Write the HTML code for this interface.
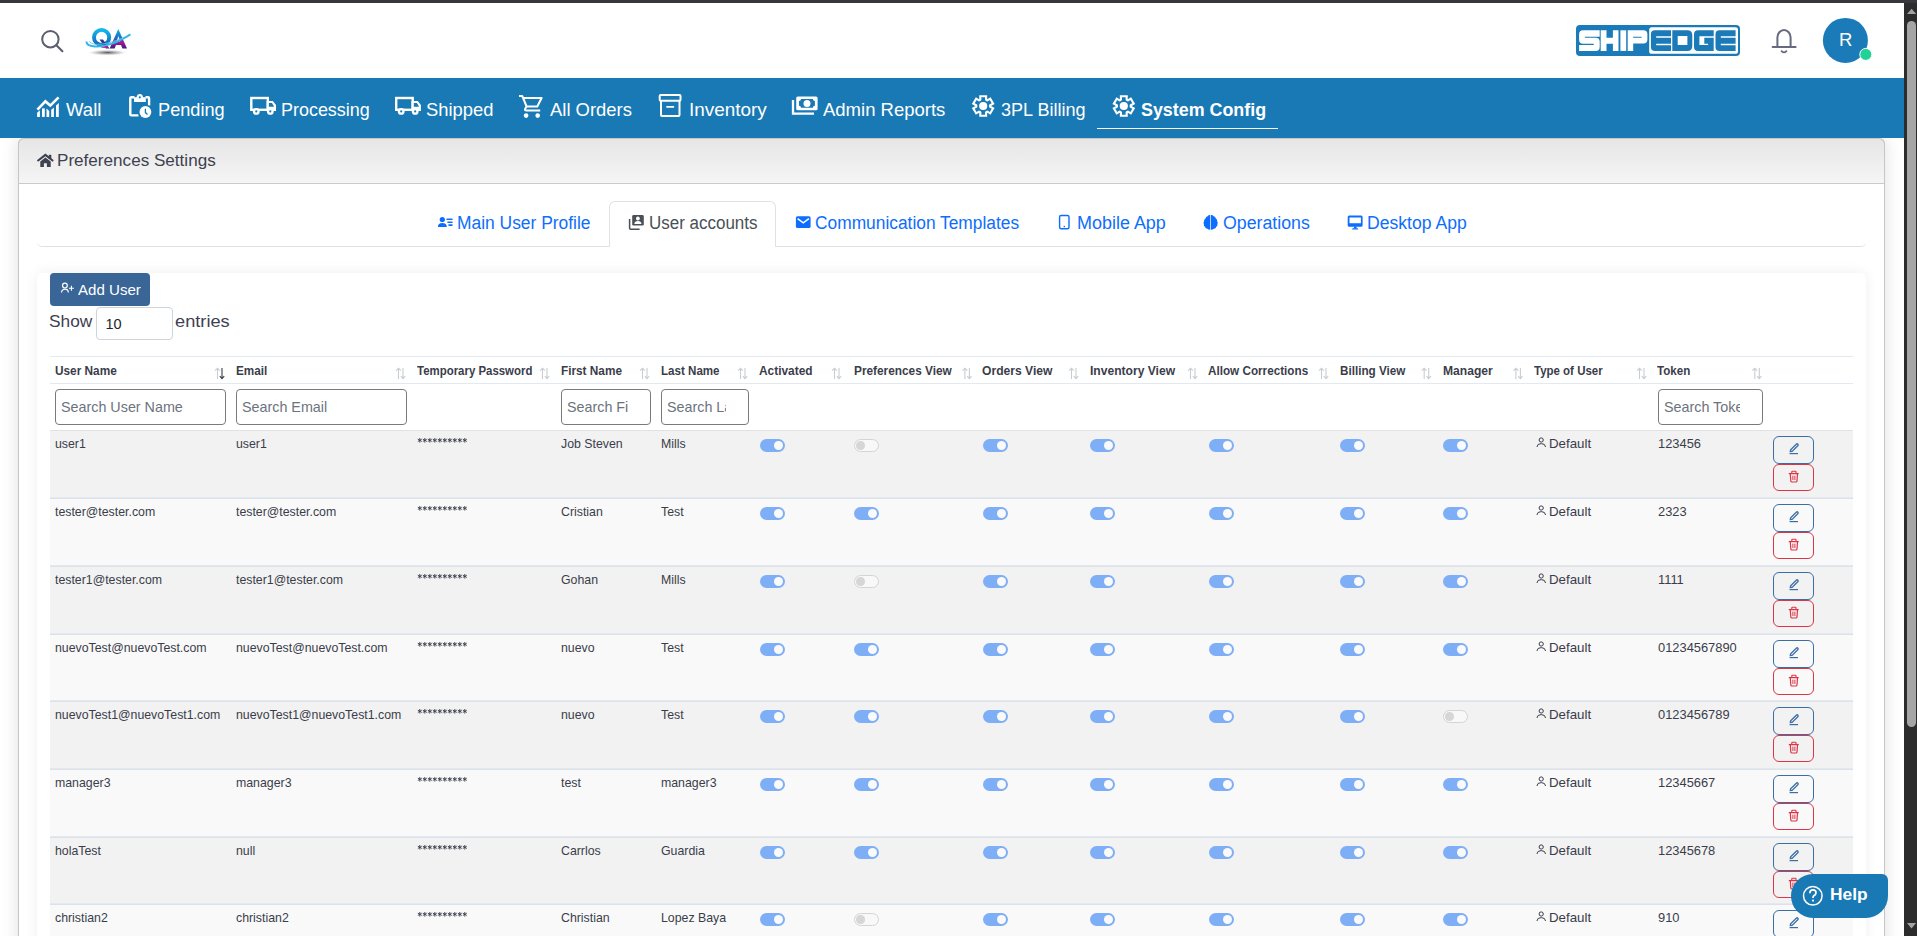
<!DOCTYPE html>
<html><head><meta charset="utf-8">
<style>
html,body{margin:0;padding:0}
body{width:1917px;height:936px;overflow:hidden;position:relative;background:#fff;font-family:"Liberation Sans", sans-serif}
.a{position:absolute;box-sizing:border-box}
.t{position:absolute;white-space:pre;transform-origin:0 0;font-family:"Liberation Sans", sans-serif}
</style></head><body>
<div class="a" style="left:18px;top:138px;width:1867px;height:830px;background:#fff;border:1px solid #c6c6c6;border-radius:6px;box-shadow:0 0 16px 2px rgba(0,0,0,0.10)"></div>
<div class="a" style="left:18px;top:138px;width:1867px;height:46px;background:linear-gradient(#e6e6e6,#f5f5f5);border:1px solid #c6c6c6;border-bottom-color:#cacaca;border-radius:6px 6px 0 0"></div>
<div class="a" style="left:0;top:0;width:1917px;height:78px;background:#fff"></div>
<div class="a" style="left:0;top:0;width:1917px;height:3px;background:#38373c"></div>
<div class="a" style="left:0;top:78px;width:1904px;height:60px;background:#1979b5"></div>
<div class="a" style="left:1097px;top:127.5px;width:181px;height:1.5px;background:#fff"></div>
<div class="a" style="left:37px;top:240px;width:1829px;height:7px;border-bottom:1px solid #dee2e6;border-radius:0 0 5px 5px"></div>
<div class="a" style="left:609px;top:201px;width:167px;height:46px;background:#fff;border:1px solid #dee2e6;border-bottom:none;border-radius:6px 6px 0 0"></div>
<div class="a" style="left:37px;top:273px;width:1829px;height:700px;background:#fff;border-radius:6px;box-shadow:0 0 14px rgba(0,0,0,0.07)"></div>
<div class="a" style="left:50px;top:273px;width:100px;height:33px;background:#396597;border-radius:4px"></div>
<div class="a" style="left:96.4px;top:306.5px;width:76.3px;height:33px;background:#fff;border:1px solid #ced4da;border-radius:4px"></div>
<div class="a" style="left:50px;top:356px;width:1803px;height:1px;background:#e3e9f1"></div>
<div class="a" style="left:50px;top:383px;width:1803px;height:1px;background:#e3e9f1"></div>
<div class="a" style="left:50px;top:430px;width:1803px;height:67px;background:#f2f2f2"></div>
<div class="a" style="left:50px;top:430px;width:1803px;height:1px;background:#dee2e5"></div>
<div class="a" style="left:50px;top:498px;width:1803px;height:67px;background:#f9f9f9"></div>
<div class="a" style="left:50px;top:498px;width:1803px;height:1px;background:#dee2e5"></div>
<div class="a" style="left:50px;top:497px;width:1803px;height:1px;background:#e3e9f2"></div>
<div class="a" style="left:50px;top:566px;width:1803px;height:67px;background:#f2f2f2"></div>
<div class="a" style="left:50px;top:566px;width:1803px;height:1px;background:#dee2e5"></div>
<div class="a" style="left:50px;top:565px;width:1803px;height:1px;background:#e3e9f2"></div>
<div class="a" style="left:50px;top:634px;width:1803px;height:66px;background:#f9f9f9"></div>
<div class="a" style="left:50px;top:634px;width:1803px;height:1px;background:#dee2e5"></div>
<div class="a" style="left:50px;top:633px;width:1803px;height:1px;background:#e3e9f2"></div>
<div class="a" style="left:50px;top:701px;width:1803px;height:67px;background:#f2f2f2"></div>
<div class="a" style="left:50px;top:701px;width:1803px;height:1px;background:#dee2e5"></div>
<div class="a" style="left:50px;top:700px;width:1803px;height:1px;background:#e3e9f2"></div>
<div class="a" style="left:50px;top:769px;width:1803px;height:67px;background:#f9f9f9"></div>
<div class="a" style="left:50px;top:769px;width:1803px;height:1px;background:#dee2e5"></div>
<div class="a" style="left:50px;top:768px;width:1803px;height:1px;background:#e3e9f2"></div>
<div class="a" style="left:50px;top:837px;width:1803px;height:66px;background:#f2f2f2"></div>
<div class="a" style="left:50px;top:837px;width:1803px;height:1px;background:#dee2e5"></div>
<div class="a" style="left:50px;top:836px;width:1803px;height:1px;background:#e3e9f2"></div>
<div class="a" style="left:50px;top:904px;width:1803px;height:67px;background:#f9f9f9"></div>
<div class="a" style="left:50px;top:904px;width:1803px;height:1px;background:#dee2e5"></div>
<div class="a" style="left:50px;top:903px;width:1803px;height:1px;background:#e3e9f2"></div>
<div class="a" style="left:55.3px;top:389.2px;width:170.5px;height:35.8px;border:1px solid #7a7a7a;border-radius:4px;background:#fff"></div>
<div class="a" style="left:60.9px;top:396.1px;width:142.0px;height:21px;overflow:hidden"><div class="t" style="position:static;font-size:15px;line-height:21px;color:#6c737d;transform:scaleX(0.955)">Search User Name</div></div>
<div class="a" style="left:236.3px;top:389.2px;width:170.3px;height:35.8px;border:1px solid #7a7a7a;border-radius:4px;background:#fff"></div>
<div class="a" style="left:241.9px;top:396.1px;width:141.8px;height:21px;overflow:hidden"><div class="t" style="position:static;font-size:15px;line-height:21px;color:#6c737d;transform:scaleX(0.955)">Search Email</div></div>
<div class="a" style="left:561.1px;top:389.2px;width:89.6px;height:35.8px;border:1px solid #7a7a7a;border-radius:4px;background:#fff"></div>
<div class="a" style="left:566.7px;top:396.1px;width:61.1px;height:21px;overflow:hidden"><div class="t" style="position:static;font-size:15px;line-height:21px;color:#6c737d;transform:scaleX(0.955)">Search First Name</div></div>
<div class="a" style="left:661px;top:389.2px;width:87.7px;height:35.8px;border:1px solid #7a7a7a;border-radius:4px;background:#fff"></div>
<div class="a" style="left:666.6px;top:396.1px;width:59.2px;height:21px;overflow:hidden"><div class="t" style="position:static;font-size:15px;line-height:21px;color:#6c737d;transform:scaleX(0.955)">Search Last Name</div></div>
<div class="a" style="left:1658.3px;top:389.2px;width:104.3px;height:35.8px;border:1px solid #7a7a7a;border-radius:4px;background:#fff"></div>
<div class="a" style="left:1663.9px;top:396.1px;width:75.8px;height:21px;overflow:hidden"><div class="t" style="position:static;font-size:15px;line-height:21px;color:#6c737d;transform:scaleX(0.955)">Search Token</div></div>
<div class="a" style="left:760px;top:439px;width:25px;height:13px;border-radius:7px;background:#7eaef6"></div>
<div class="a" style="left:774px;top:441px;width:9px;height:9px;border-radius:50%;background:#fafafa"></div>
<div class="a" style="left:854px;top:439px;width:25px;height:13px;border-radius:7px;background:#f8f8f8;border:1px solid #d4d4d4"></div>
<div class="a" style="left:856.3px;top:441.2px;width:8.5px;height:8.5px;border-radius:50%;background:#d6d6d6"></div>
<div class="a" style="left:983px;top:439px;width:25px;height:13px;border-radius:7px;background:#7eaef6"></div>
<div class="a" style="left:997px;top:441px;width:9px;height:9px;border-radius:50%;background:#fafafa"></div>
<div class="a" style="left:1090px;top:439px;width:25px;height:13px;border-radius:7px;background:#7eaef6"></div>
<div class="a" style="left:1104px;top:441px;width:9px;height:9px;border-radius:50%;background:#fafafa"></div>
<div class="a" style="left:1209px;top:439px;width:25px;height:13px;border-radius:7px;background:#7eaef6"></div>
<div class="a" style="left:1223px;top:441px;width:9px;height:9px;border-radius:50%;background:#fafafa"></div>
<div class="a" style="left:1340px;top:439px;width:25px;height:13px;border-radius:7px;background:#7eaef6"></div>
<div class="a" style="left:1354px;top:441px;width:9px;height:9px;border-radius:50%;background:#fafafa"></div>
<div class="a" style="left:1443px;top:439px;width:25px;height:13px;border-radius:7px;background:#7eaef6"></div>
<div class="a" style="left:1457px;top:441px;width:9px;height:9px;border-radius:50%;background:#fafafa"></div>
<div class="a" style="left:1773px;top:436px;width:41px;height:28px;border:1px solid #3b6ea5;border-radius:6px"></div>
<div class="a" style="left:1773px;top:464px;width:41px;height:27px;border:1px solid #dc3545;border-radius:6px"></div>
<div class="a" style="left:760px;top:507px;width:25px;height:13px;border-radius:7px;background:#7eaef6"></div>
<div class="a" style="left:774px;top:509px;width:9px;height:9px;border-radius:50%;background:#fafafa"></div>
<div class="a" style="left:854px;top:507px;width:25px;height:13px;border-radius:7px;background:#7eaef6"></div>
<div class="a" style="left:868px;top:509px;width:9px;height:9px;border-radius:50%;background:#fafafa"></div>
<div class="a" style="left:983px;top:507px;width:25px;height:13px;border-radius:7px;background:#7eaef6"></div>
<div class="a" style="left:997px;top:509px;width:9px;height:9px;border-radius:50%;background:#fafafa"></div>
<div class="a" style="left:1090px;top:507px;width:25px;height:13px;border-radius:7px;background:#7eaef6"></div>
<div class="a" style="left:1104px;top:509px;width:9px;height:9px;border-radius:50%;background:#fafafa"></div>
<div class="a" style="left:1209px;top:507px;width:25px;height:13px;border-radius:7px;background:#7eaef6"></div>
<div class="a" style="left:1223px;top:509px;width:9px;height:9px;border-radius:50%;background:#fafafa"></div>
<div class="a" style="left:1340px;top:507px;width:25px;height:13px;border-radius:7px;background:#7eaef6"></div>
<div class="a" style="left:1354px;top:509px;width:9px;height:9px;border-radius:50%;background:#fafafa"></div>
<div class="a" style="left:1443px;top:507px;width:25px;height:13px;border-radius:7px;background:#7eaef6"></div>
<div class="a" style="left:1457px;top:509px;width:9px;height:9px;border-radius:50%;background:#fafafa"></div>
<div class="a" style="left:1773px;top:504px;width:41px;height:28px;border:1px solid #3b6ea5;border-radius:6px"></div>
<div class="a" style="left:1773px;top:532px;width:41px;height:27px;border:1px solid #dc3545;border-radius:6px"></div>
<div class="a" style="left:760px;top:575px;width:25px;height:13px;border-radius:7px;background:#7eaef6"></div>
<div class="a" style="left:774px;top:577px;width:9px;height:9px;border-radius:50%;background:#fafafa"></div>
<div class="a" style="left:854px;top:575px;width:25px;height:13px;border-radius:7px;background:#f8f8f8;border:1px solid #d4d4d4"></div>
<div class="a" style="left:856.3px;top:577.2px;width:8.5px;height:8.5px;border-radius:50%;background:#d6d6d6"></div>
<div class="a" style="left:983px;top:575px;width:25px;height:13px;border-radius:7px;background:#7eaef6"></div>
<div class="a" style="left:997px;top:577px;width:9px;height:9px;border-radius:50%;background:#fafafa"></div>
<div class="a" style="left:1090px;top:575px;width:25px;height:13px;border-radius:7px;background:#7eaef6"></div>
<div class="a" style="left:1104px;top:577px;width:9px;height:9px;border-radius:50%;background:#fafafa"></div>
<div class="a" style="left:1209px;top:575px;width:25px;height:13px;border-radius:7px;background:#7eaef6"></div>
<div class="a" style="left:1223px;top:577px;width:9px;height:9px;border-radius:50%;background:#fafafa"></div>
<div class="a" style="left:1340px;top:575px;width:25px;height:13px;border-radius:7px;background:#7eaef6"></div>
<div class="a" style="left:1354px;top:577px;width:9px;height:9px;border-radius:50%;background:#fafafa"></div>
<div class="a" style="left:1443px;top:575px;width:25px;height:13px;border-radius:7px;background:#7eaef6"></div>
<div class="a" style="left:1457px;top:577px;width:9px;height:9px;border-radius:50%;background:#fafafa"></div>
<div class="a" style="left:1773px;top:572px;width:41px;height:28px;border:1px solid #3b6ea5;border-radius:6px"></div>
<div class="a" style="left:1773px;top:600px;width:41px;height:27px;border:1px solid #dc3545;border-radius:6px"></div>
<div class="a" style="left:760px;top:643px;width:25px;height:13px;border-radius:7px;background:#7eaef6"></div>
<div class="a" style="left:774px;top:645px;width:9px;height:9px;border-radius:50%;background:#fafafa"></div>
<div class="a" style="left:854px;top:643px;width:25px;height:13px;border-radius:7px;background:#7eaef6"></div>
<div class="a" style="left:868px;top:645px;width:9px;height:9px;border-radius:50%;background:#fafafa"></div>
<div class="a" style="left:983px;top:643px;width:25px;height:13px;border-radius:7px;background:#7eaef6"></div>
<div class="a" style="left:997px;top:645px;width:9px;height:9px;border-radius:50%;background:#fafafa"></div>
<div class="a" style="left:1090px;top:643px;width:25px;height:13px;border-radius:7px;background:#7eaef6"></div>
<div class="a" style="left:1104px;top:645px;width:9px;height:9px;border-radius:50%;background:#fafafa"></div>
<div class="a" style="left:1209px;top:643px;width:25px;height:13px;border-radius:7px;background:#7eaef6"></div>
<div class="a" style="left:1223px;top:645px;width:9px;height:9px;border-radius:50%;background:#fafafa"></div>
<div class="a" style="left:1340px;top:643px;width:25px;height:13px;border-radius:7px;background:#7eaef6"></div>
<div class="a" style="left:1354px;top:645px;width:9px;height:9px;border-radius:50%;background:#fafafa"></div>
<div class="a" style="left:1443px;top:643px;width:25px;height:13px;border-radius:7px;background:#7eaef6"></div>
<div class="a" style="left:1457px;top:645px;width:9px;height:9px;border-radius:50%;background:#fafafa"></div>
<div class="a" style="left:1773px;top:640px;width:41px;height:28px;border:1px solid #3b6ea5;border-radius:6px"></div>
<div class="a" style="left:1773px;top:668px;width:41px;height:27px;border:1px solid #dc3545;border-radius:6px"></div>
<div class="a" style="left:760px;top:710px;width:25px;height:13px;border-radius:7px;background:#7eaef6"></div>
<div class="a" style="left:774px;top:712px;width:9px;height:9px;border-radius:50%;background:#fafafa"></div>
<div class="a" style="left:854px;top:710px;width:25px;height:13px;border-radius:7px;background:#7eaef6"></div>
<div class="a" style="left:868px;top:712px;width:9px;height:9px;border-radius:50%;background:#fafafa"></div>
<div class="a" style="left:983px;top:710px;width:25px;height:13px;border-radius:7px;background:#7eaef6"></div>
<div class="a" style="left:997px;top:712px;width:9px;height:9px;border-radius:50%;background:#fafafa"></div>
<div class="a" style="left:1090px;top:710px;width:25px;height:13px;border-radius:7px;background:#7eaef6"></div>
<div class="a" style="left:1104px;top:712px;width:9px;height:9px;border-radius:50%;background:#fafafa"></div>
<div class="a" style="left:1209px;top:710px;width:25px;height:13px;border-radius:7px;background:#7eaef6"></div>
<div class="a" style="left:1223px;top:712px;width:9px;height:9px;border-radius:50%;background:#fafafa"></div>
<div class="a" style="left:1340px;top:710px;width:25px;height:13px;border-radius:7px;background:#7eaef6"></div>
<div class="a" style="left:1354px;top:712px;width:9px;height:9px;border-radius:50%;background:#fafafa"></div>
<div class="a" style="left:1443px;top:710px;width:25px;height:13px;border-radius:7px;background:#f8f8f8;border:1px solid #d4d4d4"></div>
<div class="a" style="left:1445.3px;top:712.2px;width:8.5px;height:8.5px;border-radius:50%;background:#d6d6d6"></div>
<div class="a" style="left:1773px;top:707px;width:41px;height:28px;border:1px solid #3b6ea5;border-radius:6px"></div>
<div class="a" style="left:1773px;top:735px;width:41px;height:27px;border:1px solid #dc3545;border-radius:6px"></div>
<div class="a" style="left:760px;top:778px;width:25px;height:13px;border-radius:7px;background:#7eaef6"></div>
<div class="a" style="left:774px;top:780px;width:9px;height:9px;border-radius:50%;background:#fafafa"></div>
<div class="a" style="left:854px;top:778px;width:25px;height:13px;border-radius:7px;background:#7eaef6"></div>
<div class="a" style="left:868px;top:780px;width:9px;height:9px;border-radius:50%;background:#fafafa"></div>
<div class="a" style="left:983px;top:778px;width:25px;height:13px;border-radius:7px;background:#7eaef6"></div>
<div class="a" style="left:997px;top:780px;width:9px;height:9px;border-radius:50%;background:#fafafa"></div>
<div class="a" style="left:1090px;top:778px;width:25px;height:13px;border-radius:7px;background:#7eaef6"></div>
<div class="a" style="left:1104px;top:780px;width:9px;height:9px;border-radius:50%;background:#fafafa"></div>
<div class="a" style="left:1209px;top:778px;width:25px;height:13px;border-radius:7px;background:#7eaef6"></div>
<div class="a" style="left:1223px;top:780px;width:9px;height:9px;border-radius:50%;background:#fafafa"></div>
<div class="a" style="left:1340px;top:778px;width:25px;height:13px;border-radius:7px;background:#7eaef6"></div>
<div class="a" style="left:1354px;top:780px;width:9px;height:9px;border-radius:50%;background:#fafafa"></div>
<div class="a" style="left:1443px;top:778px;width:25px;height:13px;border-radius:7px;background:#7eaef6"></div>
<div class="a" style="left:1457px;top:780px;width:9px;height:9px;border-radius:50%;background:#fafafa"></div>
<div class="a" style="left:1773px;top:775px;width:41px;height:28px;border:1px solid #3b6ea5;border-radius:6px"></div>
<div class="a" style="left:1773px;top:803px;width:41px;height:27px;border:1px solid #dc3545;border-radius:6px"></div>
<div class="a" style="left:760px;top:846px;width:25px;height:13px;border-radius:7px;background:#7eaef6"></div>
<div class="a" style="left:774px;top:848px;width:9px;height:9px;border-radius:50%;background:#fafafa"></div>
<div class="a" style="left:854px;top:846px;width:25px;height:13px;border-radius:7px;background:#7eaef6"></div>
<div class="a" style="left:868px;top:848px;width:9px;height:9px;border-radius:50%;background:#fafafa"></div>
<div class="a" style="left:983px;top:846px;width:25px;height:13px;border-radius:7px;background:#7eaef6"></div>
<div class="a" style="left:997px;top:848px;width:9px;height:9px;border-radius:50%;background:#fafafa"></div>
<div class="a" style="left:1090px;top:846px;width:25px;height:13px;border-radius:7px;background:#7eaef6"></div>
<div class="a" style="left:1104px;top:848px;width:9px;height:9px;border-radius:50%;background:#fafafa"></div>
<div class="a" style="left:1209px;top:846px;width:25px;height:13px;border-radius:7px;background:#7eaef6"></div>
<div class="a" style="left:1223px;top:848px;width:9px;height:9px;border-radius:50%;background:#fafafa"></div>
<div class="a" style="left:1340px;top:846px;width:25px;height:13px;border-radius:7px;background:#7eaef6"></div>
<div class="a" style="left:1354px;top:848px;width:9px;height:9px;border-radius:50%;background:#fafafa"></div>
<div class="a" style="left:1443px;top:846px;width:25px;height:13px;border-radius:7px;background:#7eaef6"></div>
<div class="a" style="left:1457px;top:848px;width:9px;height:9px;border-radius:50%;background:#fafafa"></div>
<div class="a" style="left:1773px;top:843px;width:41px;height:28px;border:1px solid #3b6ea5;border-radius:6px"></div>
<div class="a" style="left:1773px;top:871px;width:41px;height:27px;border:1px solid #dc3545;border-radius:6px"></div>
<div class="a" style="left:760px;top:913px;width:25px;height:13px;border-radius:7px;background:#7eaef6"></div>
<div class="a" style="left:774px;top:915px;width:9px;height:9px;border-radius:50%;background:#fafafa"></div>
<div class="a" style="left:854px;top:913px;width:25px;height:13px;border-radius:7px;background:#f8f8f8;border:1px solid #d4d4d4"></div>
<div class="a" style="left:856.3px;top:915.2px;width:8.5px;height:8.5px;border-radius:50%;background:#d6d6d6"></div>
<div class="a" style="left:983px;top:913px;width:25px;height:13px;border-radius:7px;background:#7eaef6"></div>
<div class="a" style="left:997px;top:915px;width:9px;height:9px;border-radius:50%;background:#fafafa"></div>
<div class="a" style="left:1090px;top:913px;width:25px;height:13px;border-radius:7px;background:#7eaef6"></div>
<div class="a" style="left:1104px;top:915px;width:9px;height:9px;border-radius:50%;background:#fafafa"></div>
<div class="a" style="left:1209px;top:913px;width:25px;height:13px;border-radius:7px;background:#7eaef6"></div>
<div class="a" style="left:1223px;top:915px;width:9px;height:9px;border-radius:50%;background:#fafafa"></div>
<div class="a" style="left:1340px;top:913px;width:25px;height:13px;border-radius:7px;background:#7eaef6"></div>
<div class="a" style="left:1354px;top:915px;width:9px;height:9px;border-radius:50%;background:#fafafa"></div>
<div class="a" style="left:1443px;top:913px;width:25px;height:13px;border-radius:7px;background:#7eaef6"></div>
<div class="a" style="left:1457px;top:915px;width:9px;height:9px;border-radius:50%;background:#fafafa"></div>
<div class="a" style="left:1773px;top:910px;width:41px;height:28px;border:1px solid #3b6ea5;border-radius:6px"></div>
<div class="a" style="left:1773px;top:938px;width:41px;height:27px;border:1px solid #dc3545;border-radius:6px"></div>
<div class="a" style="left:1904px;top:0;width:13px;height:936px;background:#2c2c2c"></div>
<div class="a" style="left:1904px;top:0;width:13px;height:3px;background:#38373c"></div>
<div class="a" style="left:1907px;top:21px;width:9px;height:706px;border-radius:4.5px;background:#a5a5a5"></div>
<svg class="a" style="left:0;top:0" width="1917" height="936">
<circle cx="50.4" cy="39.2" r="8.2" fill="none" stroke="#5c5f6e" stroke-width="2"/>
<line x1="56.4" y1="45.2" x2="62.4" y2="51.2" stroke="#5c5f6e" stroke-width="2.1" stroke-linecap="round"/>
<defs>
<linearGradient id="gq" x1="0" y1="0" x2="0" y2="1"><stop offset="0" stop-color="#12b7ec"/><stop offset="1" stop-color="#1a62b8"/></linearGradient>
<linearGradient id="ga" x1="0" y1="0" x2="0" y2="1"><stop offset="0" stop-color="#12b4e8"/><stop offset="0.45" stop-color="#1b6fc2"/><stop offset="0.7" stop-color="#a8168c"/><stop offset="1" stop-color="#3a1f7c"/></linearGradient>
<radialGradient id="gsh" cx="0.5" cy="0.5" r="0.5"><stop offset="0" stop-color="#444" stop-opacity="0.9"/><stop offset="0.6" stop-color="#888" stop-opacity="0.35"/><stop offset="1" stop-color="#fff" stop-opacity="0"/></radialGradient>
</defs>
<ellipse cx="107.5" cy="52.6" rx="21" ry="3.2" fill="url(#gsh)"/>
<ellipse cx="101.6" cy="37.4" rx="7.6" ry="7.5" fill="none" stroke="url(#gq)" stroke-width="3.9"/>
<path d="M99.5,39.6 H103 L109.5,48.5 H105.8 Z" fill="#2a3f92"/>
<path fill-rule="evenodd" d="M118.3,29 L109.6,48.5 H114.6 L116,45 H121 L122.4,48.5 H127 Z M118.4,36 L116.6,41.6 H120.2 Z" fill="url(#ga)"/>
<path d="M101,46.6 C103,47.5 106,47.4 108,46.6" fill="none" stroke="#d81d8a" stroke-width="1.5"/><path d="M86.4,41.6 C86.5,47.8 100,47.8 112,43.6 C119,41.2 125,37.5 130.5,34.4" fill="none" stroke="#2fb6ea" stroke-width="2"/>
<path d="M89.5,41 C91,45.5 103,46.5 124,37.5" fill="none" stroke="#5cc8f0" stroke-width="0.9"/>
<rect x="1576" y="25" width="164" height="31" rx="4" fill="#1b7ab8"/>
<rect x="1649.2" y="27.2" width="88.8" height="26.6" rx="2.6" fill="#fff"/>
<path fill="#fff" d="M1579.1,34.3 Q1579.1,30.3 1583.1,30.3 H1599.7 V36.8 H1584.9 V37.8 H1595.7 Q1599.7,37.8 1599.7,41.8 V46.9 Q1599.7,50.9 1595.7,50.9 H1579.1 V44.9 H1593.7 V43.8 H1583.1 Q1579.1,43.8 1579.1,39.8 Z"/>
<path fill="#fff" d="M1600.7,30.3 H1606.5 V37.8 H1612.9 V30.3 H1618.5 V50.9 H1612.9 V43.8 H1606.5 V50.9 H1600.7 Z"/>
<rect x="1620.4" y="30.3" width="5.8" height="20.6" fill="#fff"/>
<path fill="#fff" fill-rule="evenodd" d="M1627.7,30.3 H1643.4 Q1647.4,30.3 1647.4,34.3 V39.6 Q1647.4,43.6 1643.4,43.6 H1633.2 V50.9 H1627.7 Z M1633.1,36.8 H1641.6 V37.8 H1633.1 Z"/>
<path fill="#1b7ab8" d="M1654.9,30.2 H1671.0 V36.3 H1656.2 V37.8 H1671.0 V43.7 H1656.2 V45.3 H1671.0 V50.9 H1654.9 Q1650.9,50.9 1650.9,46.9 V34.2 Q1650.9,30.2 1654.9,30.2 Z"/>
<path fill="#1b7ab8" d="M1719.5,30.2 H1735.6 V36.3 H1720.8 V37.8 H1735.6 V43.7 H1720.8 V45.3 H1735.6 V50.9 H1719.5 Q1715.5,50.9 1715.5,46.9 V34.2 Q1715.5,30.2 1719.5,30.2 Z"/>
<path fill="#1b7ab8" fill-rule="evenodd" d="M1672.3,30.2 H1687.3 Q1692.3,30.2 1692.3,35.2 V45.9 Q1692.3,50.9 1687.3,50.9 H1672.3 Z M1677.7,36 H1687.4 V45 H1677.7 Z"/>
<path fill="#1b7ab8" fill-rule="evenodd" d="M1698,30.2 H1713.7 V50.9 H1698 Q1694,50.9 1694,46.9 V34.2 Q1694,30.2 1698,30.2 Z M1699.4,36.3 H1713.7 V37.8 H1704.3 V43.7 H1708.1 V45 H1699.4 Z"/>
<path d="M1777.4,46.5 V37.6 A6.6,7.6 0 0 1 1790.6,37.6 V46.5" fill="none" stroke="#676a7d" stroke-width="2"/>
<path d="M1772.6,47 H1795.6" stroke="#676a7d" stroke-width="2" stroke-linecap="round"/>
<path d="M1781.6,51.2 Q1784,53.6 1786.4,51.2" fill="none" stroke="#676a7d" stroke-width="1.8" stroke-linecap="round"/>
<circle cx="1845.4" cy="40.4" r="22.5" fill="#1b7ab8"/>
<circle cx="1865.8" cy="54.4" r="6" fill="#21d296" stroke="#fff" stroke-width="1"/>
<g transform="translate(34,90)"><polyline points="3.4,19.6 11.4,11.4 16.3,15.6 24.6,7.3" fill="none" stroke="#ffffff" stroke-width="2.6"/><path d="M3.1,22.8 L5.9,20.2 V26.9 H3.1 Z" fill="#ffffff"/><rect x="8" y="18.4" width="2.8" height="8.5" fill="#ffffff"/><path d="M12.5,18.4 L15.2,21 V26.9 H12.5 Z" fill="#ffffff"/><path d="M17.2,19.8 L19.9,17.5 V26.9 H17.2 Z" fill="#ffffff"/><path d="M22,15.5 L24.8,13 V26.9 H22 Z" fill="#ffffff"/></g>
<g transform="translate(126,90)"><path d="M12.5,25.4 H5.4 Q4.3,25.4 4.3,24.3 V8.3 Q4.3,7.2 5.4,7.2 H8.5 M19.5,7.2 H22 Q23.1,7.2 23.1,8.3 V15.5" fill="none" stroke="#ffffff" stroke-width="2.4"/><path d="M8,11.9 V7.2 H10.6 Q11,4.1 13.8,4.1 Q16.6,4.1 17,7.2 H19.8 V11.9 Z" fill="#ffffff"/><circle cx="13.8" cy="7.3" r="1.1" fill="#1979b5"/><circle cx="19.4" cy="22" r="7.2" fill="#1979b5"/><circle cx="19.4" cy="22" r="5.9" fill="#ffffff"/><path d="M19.4,18.8 V22.6 L21.5,24.5" fill="none" stroke="#1979b5" stroke-width="1.3"/></g>
<g transform="translate(246,90)"><rect x="5.3" y="8" width="16.5" height="11.8" fill="none" stroke="#ffffff" stroke-width="2.4"/><path d="M20.6,11 H26.8 L30,15 V21 H20.6 Z" fill="#ffffff"/><path d="M22.9,13 H26 L28.2,16.8 H22.9 Z" fill="#1979b5"/><circle cx="10.3" cy="21.4" r="3.4" fill="#ffffff"/><circle cx="10.3" cy="21.4" r="1.1" fill="#1979b5"/><circle cx="24.3" cy="21.4" r="3.4" fill="#ffffff"/><circle cx="24.3" cy="21.4" r="1.1" fill="#1979b5"/></g>
<g transform="translate(390.9,90)"><rect x="5.3" y="8" width="16.5" height="11.8" fill="none" stroke="#ffffff" stroke-width="2.4"/><path d="M20.6,11 H26.8 L30,15 V21 H20.6 Z" fill="#ffffff"/><path d="M22.9,13 H26 L28.2,16.8 H22.9 Z" fill="#1979b5"/><circle cx="10.3" cy="21.4" r="3.4" fill="#ffffff"/><circle cx="10.3" cy="21.4" r="1.1" fill="#1979b5"/><circle cx="24.3" cy="21.4" r="3.4" fill="#ffffff"/><circle cx="24.3" cy="21.4" r="1.1" fill="#1979b5"/></g>
<g transform="translate(516,90)"><path d="M3,5.9 H6.2 L10.6,16.5 H21.3 L25.6,8 H7" fill="none" stroke="#ffffff" stroke-width="2" stroke-linejoin="round"/><path d="M10.6,16.5 L9.2,18.6 Q8.4,20.6 10.4,20.6 H24.2" fill="none" stroke="#ffffff" stroke-width="2"/><circle cx="10.1" cy="25.6" r="2.3" fill="#ffffff"/><circle cx="21.7" cy="25.6" r="2.3" fill="#ffffff"/></g>
<g transform="translate(655,90)"><rect x="4.7" y="5.1" width="20.8" height="5.6" rx="1" fill="none" stroke="#ffffff" stroke-width="2"/><path d="M6,10.7 V25 Q6,26 7,26 H23.5 Q24.5,26 24.5,25 V10.7" fill="none" stroke="#ffffff" stroke-width="2"/><line x1="12" y1="16.8" x2="18.4" y2="16.8" stroke="#ffffff" stroke-width="1.8" stroke-linecap="round"/></g>
<g transform="translate(788,90)"><rect x="8.2" y="6.5" width="21.4" height="13.8" rx="1.6" fill="#ffffff"/><path d="M13,9 H24.9 Q24.9,11 26.9,11 V15.8 Q24.9,15.8 24.9,17.8 H13 Q13,15.8 11,15.8 V11 Q13,11 13,9 Z" fill="#1979b5"/><circle cx="19" cy="13.4" r="3.5" fill="#ffffff"/><path d="M5,10 V23.7 H26" fill="none" stroke="#ffffff" stroke-width="2.3"/></g>
<g transform="translate(968,90)"><path d="M12.34,9.61 L12.28,6.23 L18.12,6.23 L18.06,9.61 L18.59,10.12 L19.31,10.33 L22.21,8.59 L25.12,13.64 L22.16,15.28 L21.99,16.00 L22.16,16.72 L25.12,18.36 L22.21,23.41 L19.31,21.67 L18.59,21.88 L18.06,22.39 L18.12,25.77 L12.28,25.77 L12.34,22.39 L11.80,21.88 L11.09,21.67 L8.19,23.41 L5.28,18.36 L8.24,16.72 L8.41,16.00 L8.24,15.28 L5.28,13.64 L8.19,8.59 L11.09,10.33 L11.81,10.12 Z" fill="none" stroke="#ffffff" stroke-width="2.1" stroke-linejoin="miter"/><circle cx="15.2" cy="16" r="4.1" fill="#ffffff"/></g>
<g transform="translate(1108.6,90)"><path d="M12.34,9.61 L12.28,6.23 L18.12,6.23 L18.06,9.61 L18.59,10.12 L19.31,10.33 L22.21,8.59 L25.12,13.64 L22.16,15.28 L21.99,16.00 L22.16,16.72 L25.12,18.36 L22.21,23.41 L19.31,21.67 L18.59,21.88 L18.06,22.39 L18.12,25.77 L12.28,25.77 L12.34,22.39 L11.80,21.88 L11.09,21.67 L8.19,23.41 L5.28,18.36 L8.24,16.72 L8.41,16.00 L8.24,15.28 L5.28,13.64 L8.19,8.59 L11.09,10.33 L11.81,10.12 Z" fill="none" stroke="#ffffff" stroke-width="2.1" stroke-linejoin="miter"/><circle cx="15.2" cy="16" r="4.1" fill="#ffffff"/></g>
<path d="M37.5,161 L45.4,154.9 L53.2,161" fill="none" stroke="#3e4150" stroke-width="2.1"/>
<rect x="48.8" y="154.8" width="2.5" height="4.2" fill="#3e4150"/>
<path fill-rule="evenodd" d="M40.3,161.4 L45.4,157.6 L50.7,161.4 V166.9 H40.3 Z M43.9,163.3 H46.9 V166.9 H43.9 Z" fill="#3e4150"/>
<g transform="translate(434,210)"><circle cx="8.3" cy="9.5" r="2.6" fill="#0d6efd"/><path d="M3.9,17 Q3.9,13 8.3,13 Q12.8,13 12.8,17 Z" fill="#0d6efd"/><rect x="12.3" y="8.5" width="6.5" height="1.6" rx="0.8" fill="#0d6efd"/><rect x="13.2" y="11.4" width="5.6" height="1.6" rx="0.8" fill="#0d6efd"/><rect x="14.2" y="14.3" width="4.6" height="1.6" rx="0.8" fill="#0d6efd"/></g>
<g transform="translate(624,210)"><rect x="8.2" y="5" width="11.6" height="10.6" rx="1.4" fill="#495057"/><circle cx="13.9" cy="8.5" r="1.9" fill="#fff"/><path d="M10.3,14.1 Q10.6,11 13.9,11 Q17.2,11 17.5,14.1 Z" fill="#fff"/><path d="M5.6,9 V18.3 Q5.6,19.2 6.5,19.2 H15.6" fill="none" stroke="#495057" stroke-width="1.5"/></g>
<rect x="795.9" y="216.3" width="14.7" height="11.7" rx="1.6" fill="#0d6efd"/><polyline points="797.6,218.6 803.25,222.8 808.9,218.6" fill="none" stroke="#fff" stroke-width="1.5"/>
<rect x="1059.6" y="215.5" width="9.4" height="13.3" rx="1.5" fill="none" stroke="#0d6efd" stroke-width="1.4"/><circle cx="1064.3" cy="226.6" r="0.8" fill="#0d6efd"/>
<g transform="translate(1196,210)"><path d="M14.3,5 V19.6 Q12.6,19.8 11.4,18.7 Q9.4,18.6 9,16.8 Q7.5,15.9 7.9,14.2 Q7,12.6 8.1,11.2 Q7.9,9.3 9.5,8.5 Q9.8,6.6 11.6,6.2 Q12.4,4.9 14.3,5 Z" fill="#0d6efd"/><path d="M15,5 V19.6 Q16.7,19.8 17.9,18.7 Q19.9,18.6 20.3,16.8 Q21.8,15.9 21.4,14.2 Q22.3,12.6 21.2,11.2 Q21.4,9.3 19.8,8.5 Q19.5,6.6 17.7,6.2 Q16.9,4.9 15,5 Z" fill="#0d6efd"/></g>
<path fill-rule="evenodd" d="M1349.2,215.5 H1361.1 Q1362.6,215.5 1362.6,217 V225.2 Q1362.6,226.7 1361.1,226.7 H1349.2 Q1347.7,226.7 1347.7,225.2 V217 Q1347.7,215.5 1349.2,215.5 Z M1349.5,217.4 V223.2 H1360.9 V217.4 Z" fill="#0d6efd"/><rect x="1353.9" y="226.5" width="2.7" height="2" fill="#0d6efd"/><rect x="1352.2" y="228.2" width="6" height="1.3" rx="0.5" fill="#0d6efd"/>
<g transform="translate(419.8,440.3)" stroke="#3a3d4a" stroke-width="0.9"><line x1="0" y1="-2.3" x2="0" y2="2.3"/><line x1="-2" y1="-1.15" x2="2" y2="1.15"/><line x1="-2" y1="1.15" x2="2" y2="-1.15"/></g>
<g transform="translate(424.8,440.3)" stroke="#3a3d4a" stroke-width="0.9"><line x1="0" y1="-2.3" x2="0" y2="2.3"/><line x1="-2" y1="-1.15" x2="2" y2="1.15"/><line x1="-2" y1="1.15" x2="2" y2="-1.15"/></g>
<g transform="translate(429.8,440.3)" stroke="#3a3d4a" stroke-width="0.9"><line x1="0" y1="-2.3" x2="0" y2="2.3"/><line x1="-2" y1="-1.15" x2="2" y2="1.15"/><line x1="-2" y1="1.15" x2="2" y2="-1.15"/></g>
<g transform="translate(434.8,440.3)" stroke="#3a3d4a" stroke-width="0.9"><line x1="0" y1="-2.3" x2="0" y2="2.3"/><line x1="-2" y1="-1.15" x2="2" y2="1.15"/><line x1="-2" y1="1.15" x2="2" y2="-1.15"/></g>
<g transform="translate(439.8,440.3)" stroke="#3a3d4a" stroke-width="0.9"><line x1="0" y1="-2.3" x2="0" y2="2.3"/><line x1="-2" y1="-1.15" x2="2" y2="1.15"/><line x1="-2" y1="1.15" x2="2" y2="-1.15"/></g>
<g transform="translate(444.8,440.3)" stroke="#3a3d4a" stroke-width="0.9"><line x1="0" y1="-2.3" x2="0" y2="2.3"/><line x1="-2" y1="-1.15" x2="2" y2="1.15"/><line x1="-2" y1="1.15" x2="2" y2="-1.15"/></g>
<g transform="translate(449.8,440.3)" stroke="#3a3d4a" stroke-width="0.9"><line x1="0" y1="-2.3" x2="0" y2="2.3"/><line x1="-2" y1="-1.15" x2="2" y2="1.15"/><line x1="-2" y1="1.15" x2="2" y2="-1.15"/></g>
<g transform="translate(454.8,440.3)" stroke="#3a3d4a" stroke-width="0.9"><line x1="0" y1="-2.3" x2="0" y2="2.3"/><line x1="-2" y1="-1.15" x2="2" y2="1.15"/><line x1="-2" y1="1.15" x2="2" y2="-1.15"/></g>
<g transform="translate(459.8,440.3)" stroke="#3a3d4a" stroke-width="0.9"><line x1="0" y1="-2.3" x2="0" y2="2.3"/><line x1="-2" y1="-1.15" x2="2" y2="1.15"/><line x1="-2" y1="1.15" x2="2" y2="-1.15"/></g>
<g transform="translate(464.8,440.3)" stroke="#3a3d4a" stroke-width="0.9"><line x1="0" y1="-2.3" x2="0" y2="2.3"/><line x1="-2" y1="-1.15" x2="2" y2="1.15"/><line x1="-2" y1="1.15" x2="2" y2="-1.15"/></g>
<circle cx="1541.2" cy="440" r="2.1" fill="none" stroke="#3a3d4a" stroke-width="1"/>
<path d="M1536.9,447 Q1537.2,443.6 1541.2,443.6 Q1545.3,443.6 1545.6,447" fill="none" stroke="#3a3d4a" stroke-width="1"/>
<g transform="translate(1780,438)" fill="none" stroke="#3b6ea5"><path d="M10.3,13.5 L10.6,11.9 L16.3,6.2 Q17.1,5.4 17.9,6.2 Q18.6,7 17.8,7.8 L12.1,13.4 Z" stroke-width="1.3"/><path d="M9.6,15.6 H18" stroke-width="1.2"/></g>
<g transform="translate(1780,438)" fill="none" stroke="#dc3545"><path d="M8.8,35.6 H18.7" stroke-width="1.3"/><path d="M11.8,35.3 V33.8 Q11.8,33.2 12.4,33.2 H15.4 Q16,33.2 16,33.8 V35.3" stroke-width="1.1"/><path d="M10.3,35.8 L10.8,43 Q10.9,44 11.9,44 H15.9 Q16.9,44 17,43 L17.5,35.8" stroke-width="1.2"/><path d="M12.9,37.6 V42 M14.9,37.6 V42" stroke-width="1"/></g>
<g transform="translate(419.8,508.3)" stroke="#3a3d4a" stroke-width="0.9"><line x1="0" y1="-2.3" x2="0" y2="2.3"/><line x1="-2" y1="-1.15" x2="2" y2="1.15"/><line x1="-2" y1="1.15" x2="2" y2="-1.15"/></g>
<g transform="translate(424.8,508.3)" stroke="#3a3d4a" stroke-width="0.9"><line x1="0" y1="-2.3" x2="0" y2="2.3"/><line x1="-2" y1="-1.15" x2="2" y2="1.15"/><line x1="-2" y1="1.15" x2="2" y2="-1.15"/></g>
<g transform="translate(429.8,508.3)" stroke="#3a3d4a" stroke-width="0.9"><line x1="0" y1="-2.3" x2="0" y2="2.3"/><line x1="-2" y1="-1.15" x2="2" y2="1.15"/><line x1="-2" y1="1.15" x2="2" y2="-1.15"/></g>
<g transform="translate(434.8,508.3)" stroke="#3a3d4a" stroke-width="0.9"><line x1="0" y1="-2.3" x2="0" y2="2.3"/><line x1="-2" y1="-1.15" x2="2" y2="1.15"/><line x1="-2" y1="1.15" x2="2" y2="-1.15"/></g>
<g transform="translate(439.8,508.3)" stroke="#3a3d4a" stroke-width="0.9"><line x1="0" y1="-2.3" x2="0" y2="2.3"/><line x1="-2" y1="-1.15" x2="2" y2="1.15"/><line x1="-2" y1="1.15" x2="2" y2="-1.15"/></g>
<g transform="translate(444.8,508.3)" stroke="#3a3d4a" stroke-width="0.9"><line x1="0" y1="-2.3" x2="0" y2="2.3"/><line x1="-2" y1="-1.15" x2="2" y2="1.15"/><line x1="-2" y1="1.15" x2="2" y2="-1.15"/></g>
<g transform="translate(449.8,508.3)" stroke="#3a3d4a" stroke-width="0.9"><line x1="0" y1="-2.3" x2="0" y2="2.3"/><line x1="-2" y1="-1.15" x2="2" y2="1.15"/><line x1="-2" y1="1.15" x2="2" y2="-1.15"/></g>
<g transform="translate(454.8,508.3)" stroke="#3a3d4a" stroke-width="0.9"><line x1="0" y1="-2.3" x2="0" y2="2.3"/><line x1="-2" y1="-1.15" x2="2" y2="1.15"/><line x1="-2" y1="1.15" x2="2" y2="-1.15"/></g>
<g transform="translate(459.8,508.3)" stroke="#3a3d4a" stroke-width="0.9"><line x1="0" y1="-2.3" x2="0" y2="2.3"/><line x1="-2" y1="-1.15" x2="2" y2="1.15"/><line x1="-2" y1="1.15" x2="2" y2="-1.15"/></g>
<g transform="translate(464.8,508.3)" stroke="#3a3d4a" stroke-width="0.9"><line x1="0" y1="-2.3" x2="0" y2="2.3"/><line x1="-2" y1="-1.15" x2="2" y2="1.15"/><line x1="-2" y1="1.15" x2="2" y2="-1.15"/></g>
<circle cx="1541.2" cy="508" r="2.1" fill="none" stroke="#3a3d4a" stroke-width="1"/>
<path d="M1536.9,515 Q1537.2,511.6 1541.2,511.6 Q1545.3,511.6 1545.6,515" fill="none" stroke="#3a3d4a" stroke-width="1"/>
<g transform="translate(1780,506)" fill="none" stroke="#3b6ea5"><path d="M10.3,13.5 L10.6,11.9 L16.3,6.2 Q17.1,5.4 17.9,6.2 Q18.6,7 17.8,7.8 L12.1,13.4 Z" stroke-width="1.3"/><path d="M9.6,15.6 H18" stroke-width="1.2"/></g>
<g transform="translate(1780,506)" fill="none" stroke="#dc3545"><path d="M8.8,35.6 H18.7" stroke-width="1.3"/><path d="M11.8,35.3 V33.8 Q11.8,33.2 12.4,33.2 H15.4 Q16,33.2 16,33.8 V35.3" stroke-width="1.1"/><path d="M10.3,35.8 L10.8,43 Q10.9,44 11.9,44 H15.9 Q16.9,44 17,43 L17.5,35.8" stroke-width="1.2"/><path d="M12.9,37.6 V42 M14.9,37.6 V42" stroke-width="1"/></g>
<g transform="translate(419.8,576.3)" stroke="#3a3d4a" stroke-width="0.9"><line x1="0" y1="-2.3" x2="0" y2="2.3"/><line x1="-2" y1="-1.15" x2="2" y2="1.15"/><line x1="-2" y1="1.15" x2="2" y2="-1.15"/></g>
<g transform="translate(424.8,576.3)" stroke="#3a3d4a" stroke-width="0.9"><line x1="0" y1="-2.3" x2="0" y2="2.3"/><line x1="-2" y1="-1.15" x2="2" y2="1.15"/><line x1="-2" y1="1.15" x2="2" y2="-1.15"/></g>
<g transform="translate(429.8,576.3)" stroke="#3a3d4a" stroke-width="0.9"><line x1="0" y1="-2.3" x2="0" y2="2.3"/><line x1="-2" y1="-1.15" x2="2" y2="1.15"/><line x1="-2" y1="1.15" x2="2" y2="-1.15"/></g>
<g transform="translate(434.8,576.3)" stroke="#3a3d4a" stroke-width="0.9"><line x1="0" y1="-2.3" x2="0" y2="2.3"/><line x1="-2" y1="-1.15" x2="2" y2="1.15"/><line x1="-2" y1="1.15" x2="2" y2="-1.15"/></g>
<g transform="translate(439.8,576.3)" stroke="#3a3d4a" stroke-width="0.9"><line x1="0" y1="-2.3" x2="0" y2="2.3"/><line x1="-2" y1="-1.15" x2="2" y2="1.15"/><line x1="-2" y1="1.15" x2="2" y2="-1.15"/></g>
<g transform="translate(444.8,576.3)" stroke="#3a3d4a" stroke-width="0.9"><line x1="0" y1="-2.3" x2="0" y2="2.3"/><line x1="-2" y1="-1.15" x2="2" y2="1.15"/><line x1="-2" y1="1.15" x2="2" y2="-1.15"/></g>
<g transform="translate(449.8,576.3)" stroke="#3a3d4a" stroke-width="0.9"><line x1="0" y1="-2.3" x2="0" y2="2.3"/><line x1="-2" y1="-1.15" x2="2" y2="1.15"/><line x1="-2" y1="1.15" x2="2" y2="-1.15"/></g>
<g transform="translate(454.8,576.3)" stroke="#3a3d4a" stroke-width="0.9"><line x1="0" y1="-2.3" x2="0" y2="2.3"/><line x1="-2" y1="-1.15" x2="2" y2="1.15"/><line x1="-2" y1="1.15" x2="2" y2="-1.15"/></g>
<g transform="translate(459.8,576.3)" stroke="#3a3d4a" stroke-width="0.9"><line x1="0" y1="-2.3" x2="0" y2="2.3"/><line x1="-2" y1="-1.15" x2="2" y2="1.15"/><line x1="-2" y1="1.15" x2="2" y2="-1.15"/></g>
<g transform="translate(464.8,576.3)" stroke="#3a3d4a" stroke-width="0.9"><line x1="0" y1="-2.3" x2="0" y2="2.3"/><line x1="-2" y1="-1.15" x2="2" y2="1.15"/><line x1="-2" y1="1.15" x2="2" y2="-1.15"/></g>
<circle cx="1541.2" cy="576" r="2.1" fill="none" stroke="#3a3d4a" stroke-width="1"/>
<path d="M1536.9,583 Q1537.2,579.6 1541.2,579.6 Q1545.3,579.6 1545.6,583" fill="none" stroke="#3a3d4a" stroke-width="1"/>
<g transform="translate(1780,574)" fill="none" stroke="#3b6ea5"><path d="M10.3,13.5 L10.6,11.9 L16.3,6.2 Q17.1,5.4 17.9,6.2 Q18.6,7 17.8,7.8 L12.1,13.4 Z" stroke-width="1.3"/><path d="M9.6,15.6 H18" stroke-width="1.2"/></g>
<g transform="translate(1780,574)" fill="none" stroke="#dc3545"><path d="M8.8,35.6 H18.7" stroke-width="1.3"/><path d="M11.8,35.3 V33.8 Q11.8,33.2 12.4,33.2 H15.4 Q16,33.2 16,33.8 V35.3" stroke-width="1.1"/><path d="M10.3,35.8 L10.8,43 Q10.9,44 11.9,44 H15.9 Q16.9,44 17,43 L17.5,35.8" stroke-width="1.2"/><path d="M12.9,37.6 V42 M14.9,37.6 V42" stroke-width="1"/></g>
<g transform="translate(419.8,644.3)" stroke="#3a3d4a" stroke-width="0.9"><line x1="0" y1="-2.3" x2="0" y2="2.3"/><line x1="-2" y1="-1.15" x2="2" y2="1.15"/><line x1="-2" y1="1.15" x2="2" y2="-1.15"/></g>
<g transform="translate(424.8,644.3)" stroke="#3a3d4a" stroke-width="0.9"><line x1="0" y1="-2.3" x2="0" y2="2.3"/><line x1="-2" y1="-1.15" x2="2" y2="1.15"/><line x1="-2" y1="1.15" x2="2" y2="-1.15"/></g>
<g transform="translate(429.8,644.3)" stroke="#3a3d4a" stroke-width="0.9"><line x1="0" y1="-2.3" x2="0" y2="2.3"/><line x1="-2" y1="-1.15" x2="2" y2="1.15"/><line x1="-2" y1="1.15" x2="2" y2="-1.15"/></g>
<g transform="translate(434.8,644.3)" stroke="#3a3d4a" stroke-width="0.9"><line x1="0" y1="-2.3" x2="0" y2="2.3"/><line x1="-2" y1="-1.15" x2="2" y2="1.15"/><line x1="-2" y1="1.15" x2="2" y2="-1.15"/></g>
<g transform="translate(439.8,644.3)" stroke="#3a3d4a" stroke-width="0.9"><line x1="0" y1="-2.3" x2="0" y2="2.3"/><line x1="-2" y1="-1.15" x2="2" y2="1.15"/><line x1="-2" y1="1.15" x2="2" y2="-1.15"/></g>
<g transform="translate(444.8,644.3)" stroke="#3a3d4a" stroke-width="0.9"><line x1="0" y1="-2.3" x2="0" y2="2.3"/><line x1="-2" y1="-1.15" x2="2" y2="1.15"/><line x1="-2" y1="1.15" x2="2" y2="-1.15"/></g>
<g transform="translate(449.8,644.3)" stroke="#3a3d4a" stroke-width="0.9"><line x1="0" y1="-2.3" x2="0" y2="2.3"/><line x1="-2" y1="-1.15" x2="2" y2="1.15"/><line x1="-2" y1="1.15" x2="2" y2="-1.15"/></g>
<g transform="translate(454.8,644.3)" stroke="#3a3d4a" stroke-width="0.9"><line x1="0" y1="-2.3" x2="0" y2="2.3"/><line x1="-2" y1="-1.15" x2="2" y2="1.15"/><line x1="-2" y1="1.15" x2="2" y2="-1.15"/></g>
<g transform="translate(459.8,644.3)" stroke="#3a3d4a" stroke-width="0.9"><line x1="0" y1="-2.3" x2="0" y2="2.3"/><line x1="-2" y1="-1.15" x2="2" y2="1.15"/><line x1="-2" y1="1.15" x2="2" y2="-1.15"/></g>
<g transform="translate(464.8,644.3)" stroke="#3a3d4a" stroke-width="0.9"><line x1="0" y1="-2.3" x2="0" y2="2.3"/><line x1="-2" y1="-1.15" x2="2" y2="1.15"/><line x1="-2" y1="1.15" x2="2" y2="-1.15"/></g>
<circle cx="1541.2" cy="644" r="2.1" fill="none" stroke="#3a3d4a" stroke-width="1"/>
<path d="M1536.9,651 Q1537.2,647.6 1541.2,647.6 Q1545.3,647.6 1545.6,651" fill="none" stroke="#3a3d4a" stroke-width="1"/>
<g transform="translate(1780,642)" fill="none" stroke="#3b6ea5"><path d="M10.3,13.5 L10.6,11.9 L16.3,6.2 Q17.1,5.4 17.9,6.2 Q18.6,7 17.8,7.8 L12.1,13.4 Z" stroke-width="1.3"/><path d="M9.6,15.6 H18" stroke-width="1.2"/></g>
<g transform="translate(1780,642)" fill="none" stroke="#dc3545"><path d="M8.8,35.6 H18.7" stroke-width="1.3"/><path d="M11.8,35.3 V33.8 Q11.8,33.2 12.4,33.2 H15.4 Q16,33.2 16,33.8 V35.3" stroke-width="1.1"/><path d="M10.3,35.8 L10.8,43 Q10.9,44 11.9,44 H15.9 Q16.9,44 17,43 L17.5,35.8" stroke-width="1.2"/><path d="M12.9,37.6 V42 M14.9,37.6 V42" stroke-width="1"/></g>
<g transform="translate(419.8,711.3)" stroke="#3a3d4a" stroke-width="0.9"><line x1="0" y1="-2.3" x2="0" y2="2.3"/><line x1="-2" y1="-1.15" x2="2" y2="1.15"/><line x1="-2" y1="1.15" x2="2" y2="-1.15"/></g>
<g transform="translate(424.8,711.3)" stroke="#3a3d4a" stroke-width="0.9"><line x1="0" y1="-2.3" x2="0" y2="2.3"/><line x1="-2" y1="-1.15" x2="2" y2="1.15"/><line x1="-2" y1="1.15" x2="2" y2="-1.15"/></g>
<g transform="translate(429.8,711.3)" stroke="#3a3d4a" stroke-width="0.9"><line x1="0" y1="-2.3" x2="0" y2="2.3"/><line x1="-2" y1="-1.15" x2="2" y2="1.15"/><line x1="-2" y1="1.15" x2="2" y2="-1.15"/></g>
<g transform="translate(434.8,711.3)" stroke="#3a3d4a" stroke-width="0.9"><line x1="0" y1="-2.3" x2="0" y2="2.3"/><line x1="-2" y1="-1.15" x2="2" y2="1.15"/><line x1="-2" y1="1.15" x2="2" y2="-1.15"/></g>
<g transform="translate(439.8,711.3)" stroke="#3a3d4a" stroke-width="0.9"><line x1="0" y1="-2.3" x2="0" y2="2.3"/><line x1="-2" y1="-1.15" x2="2" y2="1.15"/><line x1="-2" y1="1.15" x2="2" y2="-1.15"/></g>
<g transform="translate(444.8,711.3)" stroke="#3a3d4a" stroke-width="0.9"><line x1="0" y1="-2.3" x2="0" y2="2.3"/><line x1="-2" y1="-1.15" x2="2" y2="1.15"/><line x1="-2" y1="1.15" x2="2" y2="-1.15"/></g>
<g transform="translate(449.8,711.3)" stroke="#3a3d4a" stroke-width="0.9"><line x1="0" y1="-2.3" x2="0" y2="2.3"/><line x1="-2" y1="-1.15" x2="2" y2="1.15"/><line x1="-2" y1="1.15" x2="2" y2="-1.15"/></g>
<g transform="translate(454.8,711.3)" stroke="#3a3d4a" stroke-width="0.9"><line x1="0" y1="-2.3" x2="0" y2="2.3"/><line x1="-2" y1="-1.15" x2="2" y2="1.15"/><line x1="-2" y1="1.15" x2="2" y2="-1.15"/></g>
<g transform="translate(459.8,711.3)" stroke="#3a3d4a" stroke-width="0.9"><line x1="0" y1="-2.3" x2="0" y2="2.3"/><line x1="-2" y1="-1.15" x2="2" y2="1.15"/><line x1="-2" y1="1.15" x2="2" y2="-1.15"/></g>
<g transform="translate(464.8,711.3)" stroke="#3a3d4a" stroke-width="0.9"><line x1="0" y1="-2.3" x2="0" y2="2.3"/><line x1="-2" y1="-1.15" x2="2" y2="1.15"/><line x1="-2" y1="1.15" x2="2" y2="-1.15"/></g>
<circle cx="1541.2" cy="711" r="2.1" fill="none" stroke="#3a3d4a" stroke-width="1"/>
<path d="M1536.9,718 Q1537.2,714.6 1541.2,714.6 Q1545.3,714.6 1545.6,718" fill="none" stroke="#3a3d4a" stroke-width="1"/>
<g transform="translate(1780,709)" fill="none" stroke="#3b6ea5"><path d="M10.3,13.5 L10.6,11.9 L16.3,6.2 Q17.1,5.4 17.9,6.2 Q18.6,7 17.8,7.8 L12.1,13.4 Z" stroke-width="1.3"/><path d="M9.6,15.6 H18" stroke-width="1.2"/></g>
<g transform="translate(1780,709)" fill="none" stroke="#dc3545"><path d="M8.8,35.6 H18.7" stroke-width="1.3"/><path d="M11.8,35.3 V33.8 Q11.8,33.2 12.4,33.2 H15.4 Q16,33.2 16,33.8 V35.3" stroke-width="1.1"/><path d="M10.3,35.8 L10.8,43 Q10.9,44 11.9,44 H15.9 Q16.9,44 17,43 L17.5,35.8" stroke-width="1.2"/><path d="M12.9,37.6 V42 M14.9,37.6 V42" stroke-width="1"/></g>
<g transform="translate(419.8,779.3)" stroke="#3a3d4a" stroke-width="0.9"><line x1="0" y1="-2.3" x2="0" y2="2.3"/><line x1="-2" y1="-1.15" x2="2" y2="1.15"/><line x1="-2" y1="1.15" x2="2" y2="-1.15"/></g>
<g transform="translate(424.8,779.3)" stroke="#3a3d4a" stroke-width="0.9"><line x1="0" y1="-2.3" x2="0" y2="2.3"/><line x1="-2" y1="-1.15" x2="2" y2="1.15"/><line x1="-2" y1="1.15" x2="2" y2="-1.15"/></g>
<g transform="translate(429.8,779.3)" stroke="#3a3d4a" stroke-width="0.9"><line x1="0" y1="-2.3" x2="0" y2="2.3"/><line x1="-2" y1="-1.15" x2="2" y2="1.15"/><line x1="-2" y1="1.15" x2="2" y2="-1.15"/></g>
<g transform="translate(434.8,779.3)" stroke="#3a3d4a" stroke-width="0.9"><line x1="0" y1="-2.3" x2="0" y2="2.3"/><line x1="-2" y1="-1.15" x2="2" y2="1.15"/><line x1="-2" y1="1.15" x2="2" y2="-1.15"/></g>
<g transform="translate(439.8,779.3)" stroke="#3a3d4a" stroke-width="0.9"><line x1="0" y1="-2.3" x2="0" y2="2.3"/><line x1="-2" y1="-1.15" x2="2" y2="1.15"/><line x1="-2" y1="1.15" x2="2" y2="-1.15"/></g>
<g transform="translate(444.8,779.3)" stroke="#3a3d4a" stroke-width="0.9"><line x1="0" y1="-2.3" x2="0" y2="2.3"/><line x1="-2" y1="-1.15" x2="2" y2="1.15"/><line x1="-2" y1="1.15" x2="2" y2="-1.15"/></g>
<g transform="translate(449.8,779.3)" stroke="#3a3d4a" stroke-width="0.9"><line x1="0" y1="-2.3" x2="0" y2="2.3"/><line x1="-2" y1="-1.15" x2="2" y2="1.15"/><line x1="-2" y1="1.15" x2="2" y2="-1.15"/></g>
<g transform="translate(454.8,779.3)" stroke="#3a3d4a" stroke-width="0.9"><line x1="0" y1="-2.3" x2="0" y2="2.3"/><line x1="-2" y1="-1.15" x2="2" y2="1.15"/><line x1="-2" y1="1.15" x2="2" y2="-1.15"/></g>
<g transform="translate(459.8,779.3)" stroke="#3a3d4a" stroke-width="0.9"><line x1="0" y1="-2.3" x2="0" y2="2.3"/><line x1="-2" y1="-1.15" x2="2" y2="1.15"/><line x1="-2" y1="1.15" x2="2" y2="-1.15"/></g>
<g transform="translate(464.8,779.3)" stroke="#3a3d4a" stroke-width="0.9"><line x1="0" y1="-2.3" x2="0" y2="2.3"/><line x1="-2" y1="-1.15" x2="2" y2="1.15"/><line x1="-2" y1="1.15" x2="2" y2="-1.15"/></g>
<circle cx="1541.2" cy="779" r="2.1" fill="none" stroke="#3a3d4a" stroke-width="1"/>
<path d="M1536.9,786 Q1537.2,782.6 1541.2,782.6 Q1545.3,782.6 1545.6,786" fill="none" stroke="#3a3d4a" stroke-width="1"/>
<g transform="translate(1780,777)" fill="none" stroke="#3b6ea5"><path d="M10.3,13.5 L10.6,11.9 L16.3,6.2 Q17.1,5.4 17.9,6.2 Q18.6,7 17.8,7.8 L12.1,13.4 Z" stroke-width="1.3"/><path d="M9.6,15.6 H18" stroke-width="1.2"/></g>
<g transform="translate(1780,777)" fill="none" stroke="#dc3545"><path d="M8.8,35.6 H18.7" stroke-width="1.3"/><path d="M11.8,35.3 V33.8 Q11.8,33.2 12.4,33.2 H15.4 Q16,33.2 16,33.8 V35.3" stroke-width="1.1"/><path d="M10.3,35.8 L10.8,43 Q10.9,44 11.9,44 H15.9 Q16.9,44 17,43 L17.5,35.8" stroke-width="1.2"/><path d="M12.9,37.6 V42 M14.9,37.6 V42" stroke-width="1"/></g>
<g transform="translate(419.8,847.3)" stroke="#3a3d4a" stroke-width="0.9"><line x1="0" y1="-2.3" x2="0" y2="2.3"/><line x1="-2" y1="-1.15" x2="2" y2="1.15"/><line x1="-2" y1="1.15" x2="2" y2="-1.15"/></g>
<g transform="translate(424.8,847.3)" stroke="#3a3d4a" stroke-width="0.9"><line x1="0" y1="-2.3" x2="0" y2="2.3"/><line x1="-2" y1="-1.15" x2="2" y2="1.15"/><line x1="-2" y1="1.15" x2="2" y2="-1.15"/></g>
<g transform="translate(429.8,847.3)" stroke="#3a3d4a" stroke-width="0.9"><line x1="0" y1="-2.3" x2="0" y2="2.3"/><line x1="-2" y1="-1.15" x2="2" y2="1.15"/><line x1="-2" y1="1.15" x2="2" y2="-1.15"/></g>
<g transform="translate(434.8,847.3)" stroke="#3a3d4a" stroke-width="0.9"><line x1="0" y1="-2.3" x2="0" y2="2.3"/><line x1="-2" y1="-1.15" x2="2" y2="1.15"/><line x1="-2" y1="1.15" x2="2" y2="-1.15"/></g>
<g transform="translate(439.8,847.3)" stroke="#3a3d4a" stroke-width="0.9"><line x1="0" y1="-2.3" x2="0" y2="2.3"/><line x1="-2" y1="-1.15" x2="2" y2="1.15"/><line x1="-2" y1="1.15" x2="2" y2="-1.15"/></g>
<g transform="translate(444.8,847.3)" stroke="#3a3d4a" stroke-width="0.9"><line x1="0" y1="-2.3" x2="0" y2="2.3"/><line x1="-2" y1="-1.15" x2="2" y2="1.15"/><line x1="-2" y1="1.15" x2="2" y2="-1.15"/></g>
<g transform="translate(449.8,847.3)" stroke="#3a3d4a" stroke-width="0.9"><line x1="0" y1="-2.3" x2="0" y2="2.3"/><line x1="-2" y1="-1.15" x2="2" y2="1.15"/><line x1="-2" y1="1.15" x2="2" y2="-1.15"/></g>
<g transform="translate(454.8,847.3)" stroke="#3a3d4a" stroke-width="0.9"><line x1="0" y1="-2.3" x2="0" y2="2.3"/><line x1="-2" y1="-1.15" x2="2" y2="1.15"/><line x1="-2" y1="1.15" x2="2" y2="-1.15"/></g>
<g transform="translate(459.8,847.3)" stroke="#3a3d4a" stroke-width="0.9"><line x1="0" y1="-2.3" x2="0" y2="2.3"/><line x1="-2" y1="-1.15" x2="2" y2="1.15"/><line x1="-2" y1="1.15" x2="2" y2="-1.15"/></g>
<g transform="translate(464.8,847.3)" stroke="#3a3d4a" stroke-width="0.9"><line x1="0" y1="-2.3" x2="0" y2="2.3"/><line x1="-2" y1="-1.15" x2="2" y2="1.15"/><line x1="-2" y1="1.15" x2="2" y2="-1.15"/></g>
<circle cx="1541.2" cy="847" r="2.1" fill="none" stroke="#3a3d4a" stroke-width="1"/>
<path d="M1536.9,854 Q1537.2,850.6 1541.2,850.6 Q1545.3,850.6 1545.6,854" fill="none" stroke="#3a3d4a" stroke-width="1"/>
<g transform="translate(1780,845)" fill="none" stroke="#3b6ea5"><path d="M10.3,13.5 L10.6,11.9 L16.3,6.2 Q17.1,5.4 17.9,6.2 Q18.6,7 17.8,7.8 L12.1,13.4 Z" stroke-width="1.3"/><path d="M9.6,15.6 H18" stroke-width="1.2"/></g>
<g transform="translate(1780,845)" fill="none" stroke="#dc3545"><path d="M8.8,35.6 H18.7" stroke-width="1.3"/><path d="M11.8,35.3 V33.8 Q11.8,33.2 12.4,33.2 H15.4 Q16,33.2 16,33.8 V35.3" stroke-width="1.1"/><path d="M10.3,35.8 L10.8,43 Q10.9,44 11.9,44 H15.9 Q16.9,44 17,43 L17.5,35.8" stroke-width="1.2"/><path d="M12.9,37.6 V42 M14.9,37.6 V42" stroke-width="1"/></g>
<g transform="translate(419.8,914.3)" stroke="#3a3d4a" stroke-width="0.9"><line x1="0" y1="-2.3" x2="0" y2="2.3"/><line x1="-2" y1="-1.15" x2="2" y2="1.15"/><line x1="-2" y1="1.15" x2="2" y2="-1.15"/></g>
<g transform="translate(424.8,914.3)" stroke="#3a3d4a" stroke-width="0.9"><line x1="0" y1="-2.3" x2="0" y2="2.3"/><line x1="-2" y1="-1.15" x2="2" y2="1.15"/><line x1="-2" y1="1.15" x2="2" y2="-1.15"/></g>
<g transform="translate(429.8,914.3)" stroke="#3a3d4a" stroke-width="0.9"><line x1="0" y1="-2.3" x2="0" y2="2.3"/><line x1="-2" y1="-1.15" x2="2" y2="1.15"/><line x1="-2" y1="1.15" x2="2" y2="-1.15"/></g>
<g transform="translate(434.8,914.3)" stroke="#3a3d4a" stroke-width="0.9"><line x1="0" y1="-2.3" x2="0" y2="2.3"/><line x1="-2" y1="-1.15" x2="2" y2="1.15"/><line x1="-2" y1="1.15" x2="2" y2="-1.15"/></g>
<g transform="translate(439.8,914.3)" stroke="#3a3d4a" stroke-width="0.9"><line x1="0" y1="-2.3" x2="0" y2="2.3"/><line x1="-2" y1="-1.15" x2="2" y2="1.15"/><line x1="-2" y1="1.15" x2="2" y2="-1.15"/></g>
<g transform="translate(444.8,914.3)" stroke="#3a3d4a" stroke-width="0.9"><line x1="0" y1="-2.3" x2="0" y2="2.3"/><line x1="-2" y1="-1.15" x2="2" y2="1.15"/><line x1="-2" y1="1.15" x2="2" y2="-1.15"/></g>
<g transform="translate(449.8,914.3)" stroke="#3a3d4a" stroke-width="0.9"><line x1="0" y1="-2.3" x2="0" y2="2.3"/><line x1="-2" y1="-1.15" x2="2" y2="1.15"/><line x1="-2" y1="1.15" x2="2" y2="-1.15"/></g>
<g transform="translate(454.8,914.3)" stroke="#3a3d4a" stroke-width="0.9"><line x1="0" y1="-2.3" x2="0" y2="2.3"/><line x1="-2" y1="-1.15" x2="2" y2="1.15"/><line x1="-2" y1="1.15" x2="2" y2="-1.15"/></g>
<g transform="translate(459.8,914.3)" stroke="#3a3d4a" stroke-width="0.9"><line x1="0" y1="-2.3" x2="0" y2="2.3"/><line x1="-2" y1="-1.15" x2="2" y2="1.15"/><line x1="-2" y1="1.15" x2="2" y2="-1.15"/></g>
<g transform="translate(464.8,914.3)" stroke="#3a3d4a" stroke-width="0.9"><line x1="0" y1="-2.3" x2="0" y2="2.3"/><line x1="-2" y1="-1.15" x2="2" y2="1.15"/><line x1="-2" y1="1.15" x2="2" y2="-1.15"/></g>
<circle cx="1541.2" cy="914" r="2.1" fill="none" stroke="#3a3d4a" stroke-width="1"/>
<path d="M1536.9,921 Q1537.2,917.6 1541.2,917.6 Q1545.3,917.6 1545.6,921" fill="none" stroke="#3a3d4a" stroke-width="1"/>
<g transform="translate(1780,912)" fill="none" stroke="#3b6ea5"><path d="M10.3,13.5 L10.6,11.9 L16.3,6.2 Q17.1,5.4 17.9,6.2 Q18.6,7 17.8,7.8 L12.1,13.4 Z" stroke-width="1.3"/><path d="M9.6,15.6 H18" stroke-width="1.2"/></g>
<g transform="translate(1780,912)" fill="none" stroke="#dc3545"><path d="M8.8,35.6 H18.7" stroke-width="1.3"/><path d="M11.8,35.3 V33.8 Q11.8,33.2 12.4,33.2 H15.4 Q16,33.2 16,33.8 V35.3" stroke-width="1.1"/><path d="M10.3,35.8 L10.8,43 Q10.9,44 11.9,44 H15.9 Q16.9,44 17,43 L17.5,35.8" stroke-width="1.2"/><path d="M12.9,37.6 V42 M14.9,37.6 V42" stroke-width="1"/></g>
<g transform="translate(56,278)" fill="none" stroke="#fff" stroke-width="1.2"><circle cx="8.9" cy="7.6" r="2.4"/><path d="M5.5,14.6 A3.4,3.4 0 0 1 12.3,14.6"/><path d="M12.9,10.3 H17.9 M15.4,7.8 V12.8" stroke-width="1.1"/></g>
<g transform="translate(215,362)" fill="none" stroke-width="1.1"><path d="M2.5,6.3 V16.9 M0.1,8.7 L2.5,6.3 L4.9,8.7" stroke="#c9cdd2"/><path d="M7,6 V16.6 M4.8,14.2 L7,16.6 L9.2,14.2" stroke="#3a4050"/></g>
<g transform="translate(396,362)" fill="none" stroke-width="1.1"><path d="M2.5,6.3 V16.9 M0.1,8.7 L2.5,6.3 L4.9,8.7" stroke="#c9cdd2"/><path d="M7,6 V16.6 M4.8,14.2 L7,16.6 L9.2,14.2" stroke="#c9cdd2"/></g>
<g transform="translate(540,362)" fill="none" stroke-width="1.1"><path d="M2.5,6.3 V16.9 M0.1,8.7 L2.5,6.3 L4.9,8.7" stroke="#c9cdd2"/><path d="M7,6 V16.6 M4.8,14.2 L7,16.6 L9.2,14.2" stroke="#c9cdd2"/></g>
<g transform="translate(640,362)" fill="none" stroke-width="1.1"><path d="M2.5,6.3 V16.9 M0.1,8.7 L2.5,6.3 L4.9,8.7" stroke="#c9cdd2"/><path d="M7,6 V16.6 M4.8,14.2 L7,16.6 L9.2,14.2" stroke="#c9cdd2"/></g>
<g transform="translate(738,362)" fill="none" stroke-width="1.1"><path d="M2.5,6.3 V16.9 M0.1,8.7 L2.5,6.3 L4.9,8.7" stroke="#c9cdd2"/><path d="M7,6 V16.6 M4.8,14.2 L7,16.6 L9.2,14.2" stroke="#c9cdd2"/></g>
<g transform="translate(832,362)" fill="none" stroke-width="1.1"><path d="M2.5,6.3 V16.9 M0.1,8.7 L2.5,6.3 L4.9,8.7" stroke="#c9cdd2"/><path d="M7,6 V16.6 M4.8,14.2 L7,16.6 L9.2,14.2" stroke="#c9cdd2"/></g>
<g transform="translate(962.4,362)" fill="none" stroke-width="1.1"><path d="M2.5,6.3 V16.9 M0.1,8.7 L2.5,6.3 L4.9,8.7" stroke="#c9cdd2"/><path d="M7,6 V16.6 M4.8,14.2 L7,16.6 L9.2,14.2" stroke="#c9cdd2"/></g>
<g transform="translate(1069,362)" fill="none" stroke-width="1.1"><path d="M2.5,6.3 V16.9 M0.1,8.7 L2.5,6.3 L4.9,8.7" stroke="#c9cdd2"/><path d="M7,6 V16.6 M4.8,14.2 L7,16.6 L9.2,14.2" stroke="#c9cdd2"/></g>
<g transform="translate(1188,362)" fill="none" stroke-width="1.1"><path d="M2.5,6.3 V16.9 M0.1,8.7 L2.5,6.3 L4.9,8.7" stroke="#c9cdd2"/><path d="M7,6 V16.6 M4.8,14.2 L7,16.6 L9.2,14.2" stroke="#c9cdd2"/></g>
<g transform="translate(1319,362)" fill="none" stroke-width="1.1"><path d="M2.5,6.3 V16.9 M0.1,8.7 L2.5,6.3 L4.9,8.7" stroke="#c9cdd2"/><path d="M7,6 V16.6 M4.8,14.2 L7,16.6 L9.2,14.2" stroke="#c9cdd2"/></g>
<g transform="translate(1421.7,362)" fill="none" stroke-width="1.1"><path d="M2.5,6.3 V16.9 M0.1,8.7 L2.5,6.3 L4.9,8.7" stroke="#c9cdd2"/><path d="M7,6 V16.6 M4.8,14.2 L7,16.6 L9.2,14.2" stroke="#c9cdd2"/></g>
<g transform="translate(1513.4,362)" fill="none" stroke-width="1.1"><path d="M2.5,6.3 V16.9 M0.1,8.7 L2.5,6.3 L4.9,8.7" stroke="#c9cdd2"/><path d="M7,6 V16.6 M4.8,14.2 L7,16.6 L9.2,14.2" stroke="#c9cdd2"/></g>
<g transform="translate(1637,362)" fill="none" stroke-width="1.1"><path d="M2.5,6.3 V16.9 M0.1,8.7 L2.5,6.3 L4.9,8.7" stroke="#c9cdd2"/><path d="M7,6 V16.6 M4.8,14.2 L7,16.6 L9.2,14.2" stroke="#c9cdd2"/></g>
<g transform="translate(1752.3,362)" fill="none" stroke-width="1.1"><path d="M2.5,6.3 V16.9 M0.1,8.7 L2.5,6.3 L4.9,8.7" stroke="#c9cdd2"/><path d="M7,6 V16.6 M4.8,14.2 L7,16.6 L9.2,14.2" stroke="#c9cdd2"/></g>

</svg>
<div class="t" style="left:65.69px;top:96.12px;font-size:19px;line-height:27px;font-weight:400;color:#ffffff;transform:scaleX(0.9772);">Wall</div>
<div class="t" style="left:158.41px;top:96.12px;font-size:19px;line-height:27px;font-weight:400;color:#ffffff;transform:scaleX(0.9568);">Pending</div>
<div class="t" style="left:281.22px;top:96.12px;font-size:19px;line-height:27px;font-weight:400;color:#ffffff;transform:scaleX(0.9439);">Processing</div>
<div class="t" style="left:425.90px;top:96.12px;font-size:19px;line-height:27px;font-weight:400;color:#ffffff;transform:scaleX(0.9669);">Shipped</div>
<div class="t" style="left:549.59px;top:96.12px;font-size:19px;line-height:27px;font-weight:400;color:#ffffff;transform:scaleX(0.9699);">All Orders</div>
<div class="t" style="left:688.66px;top:96.12px;font-size:19px;line-height:27px;font-weight:400;color:#ffffff;transform:scaleX(0.9957);">Inventory</div>
<div class="t" style="left:822.59px;top:96.12px;font-size:19px;line-height:27px;font-weight:400;color:#ffffff;transform:scaleX(0.9734);">Admin Reports</div>
<div class="t" style="left:1000.92px;top:96.12px;font-size:19px;line-height:27px;font-weight:400;color:#ffffff;transform:scaleX(0.9500);">3PL Billing</div>
<div class="t" style="left:1141.13px;top:96.12px;font-size:19px;line-height:27px;font-weight:700;color:#ffffff;transform:scaleX(0.9406);">System Config</div>
<div class="t" style="left:56.57px;top:149.11px;font-size:17px;line-height:24px;font-weight:400;color:#3e4150;transform:scaleX(1.0058);">Preferences Settings</div>
<div class="t" style="left:457.46px;top:211.46px;font-size:18px;line-height:25px;font-weight:400;color:#0d6efd;transform:scaleX(0.9673);">Main User Profile</div>
<div class="t" style="left:648.68px;top:211.46px;font-size:18px;line-height:25px;font-weight:400;color:#495057;transform:scaleX(0.9432);">User accounts</div>
<div class="t" style="left:814.96px;top:211.46px;font-size:18px;line-height:25px;font-weight:400;color:#0d6efd;transform:scaleX(0.9639);">Communication Templates</div>
<div class="t" style="left:1076.62px;top:211.46px;font-size:18px;line-height:25px;font-weight:400;color:#0d6efd;transform:scaleX(0.9974);">Mobile App</div>
<div class="t" style="left:1222.54px;top:211.46px;font-size:18px;line-height:25px;font-weight:400;color:#0d6efd;transform:scaleX(0.9860);">Operations</div>
<div class="t" style="left:1367.04px;top:211.46px;font-size:18px;line-height:25px;font-weight:400;color:#0d6efd;transform:scaleX(0.9770);">Desktop App</div>
<div class="t" style="left:77.90px;top:279.00px;font-size:15px;line-height:21px;font-weight:400;color:#ffffff;transform:scaleX(1.0049);">Add User</div>
<div class="t" style="left:49.36px;top:309.81px;font-size:17px;line-height:24px;font-weight:400;color:#3e4150;transform:scaleX(1.0165);">Show</div>
<div class="t" style="left:175.31px;top:309.81px;font-size:17px;line-height:24px;font-weight:400;color:#3e4150;transform:scaleX(1.0725);">entries</div>
<div class="t" style="left:105.43px;top:313.88px;font-size:14.5px;line-height:20px;font-weight:400;color:#212529;">10</div>
<div class="t" style="left:54.79px;top:361.70px;font-size:13px;line-height:18px;font-weight:700;color:#3a3d4a;transform:scaleX(0.9089);">User Name</div>
<div class="t" style="left:235.70px;top:361.70px;font-size:13px;line-height:18px;font-weight:700;color:#3a3d4a;transform:scaleX(0.9037);">Email</div>
<div class="t" style="left:417.11px;top:361.70px;font-size:13px;line-height:18px;font-weight:700;color:#3a3d4a;transform:scaleX(0.8795);">Temporary Password</div>
<div class="t" style="left:560.79px;top:361.70px;font-size:13px;line-height:18px;font-weight:700;color:#3a3d4a;transform:scaleX(0.9069);">First Name</div>
<div class="t" style="left:660.91px;top:361.70px;font-size:13px;line-height:18px;font-weight:700;color:#3a3d4a;transform:scaleX(0.8905);">Last Name</div>
<div class="t" style="left:758.99px;top:361.70px;font-size:13px;line-height:18px;font-weight:700;color:#3a3d4a;transform:scaleX(0.9149);">Activated</div>
<div class="t" style="left:853.69px;top:361.70px;font-size:13px;line-height:18px;font-weight:700;color:#3a3d4a;transform:scaleX(0.9097);">Preferences View</div>
<div class="t" style="left:982.27px;top:361.70px;font-size:13px;line-height:18px;font-weight:700;color:#3a3d4a;transform:scaleX(0.9314);">Orders View</div>
<div class="t" style="left:1089.68px;top:361.70px;font-size:13px;line-height:18px;font-weight:700;color:#3a3d4a;transform:scaleX(0.9293);">Inventory View</div>
<div class="t" style="left:1208.20px;top:361.70px;font-size:13px;line-height:18px;font-weight:700;color:#3a3d4a;transform:scaleX(0.9002);">Allow Corrections</div>
<div class="t" style="left:1339.50px;top:361.70px;font-size:13px;line-height:18px;font-weight:700;color:#3a3d4a;transform:scaleX(0.8986);">Billing View</div>
<div class="t" style="left:1442.77px;top:361.70px;font-size:13px;line-height:18px;font-weight:700;color:#3a3d4a;transform:scaleX(0.9304);">Manager</div>
<div class="t" style="left:1534.31px;top:361.70px;font-size:13px;line-height:18px;font-weight:700;color:#3a3d4a;transform:scaleX(0.8826);">Type of User</div>
<div class="t" style="left:1657.31px;top:361.70px;font-size:13px;line-height:18px;font-weight:700;color:#3a3d4a;transform:scaleX(0.8907);">Token</div>
<div class="t" style="left:54.76px;top:434.50px;font-size:13px;line-height:18px;font-weight:400;color:#3a3d4a;transform:scaleX(0.9480);">user1</div>
<div class="t" style="left:235.66px;top:434.50px;font-size:13px;line-height:18px;font-weight:400;color:#3a3d4a;transform:scaleX(0.9480);">user1</div>
<div class="t" style="left:560.56px;top:434.50px;font-size:13px;line-height:18px;font-weight:400;color:#3a3d4a;transform:scaleX(0.9480);">Job Steven</div>
<div class="t" style="left:660.56px;top:434.50px;font-size:13px;line-height:18px;font-weight:400;color:#3a3d4a;transform:scaleX(0.9480);">Mills</div>
<div class="t" style="left:1657.73px;top:434.50px;font-size:13px;line-height:18px;font-weight:400;color:#3a3d4a;transform:scaleX(0.9900);">123456</div>
<div class="t" style="left:1549.30px;top:434.50px;font-size:13px;line-height:18px;font-weight:400;color:#3a3d4a;transform:scaleX(1.0229);">Default</div>
<div class="t" style="left:54.76px;top:502.50px;font-size:13px;line-height:18px;font-weight:400;color:#3a3d4a;transform:scaleX(0.9480);">tester@tester.com</div>
<div class="t" style="left:235.66px;top:502.50px;font-size:13px;line-height:18px;font-weight:400;color:#3a3d4a;transform:scaleX(0.9480);">tester@tester.com</div>
<div class="t" style="left:560.56px;top:502.50px;font-size:13px;line-height:18px;font-weight:400;color:#3a3d4a;transform:scaleX(0.9480);">Cristian</div>
<div class="t" style="left:660.56px;top:502.50px;font-size:13px;line-height:18px;font-weight:400;color:#3a3d4a;transform:scaleX(0.9480);">Test</div>
<div class="t" style="left:1657.73px;top:502.50px;font-size:13px;line-height:18px;font-weight:400;color:#3a3d4a;transform:scaleX(0.9900);">2323</div>
<div class="t" style="left:1549.30px;top:502.50px;font-size:13px;line-height:18px;font-weight:400;color:#3a3d4a;transform:scaleX(1.0229);">Default</div>
<div class="t" style="left:54.76px;top:570.50px;font-size:13px;line-height:18px;font-weight:400;color:#3a3d4a;transform:scaleX(0.9480);">tester1@tester.com</div>
<div class="t" style="left:235.66px;top:570.50px;font-size:13px;line-height:18px;font-weight:400;color:#3a3d4a;transform:scaleX(0.9480);">tester1@tester.com</div>
<div class="t" style="left:560.56px;top:570.50px;font-size:13px;line-height:18px;font-weight:400;color:#3a3d4a;transform:scaleX(0.9480);">Gohan</div>
<div class="t" style="left:660.56px;top:570.50px;font-size:13px;line-height:18px;font-weight:400;color:#3a3d4a;transform:scaleX(0.9480);">Mills</div>
<div class="t" style="left:1657.73px;top:570.50px;font-size:13px;line-height:18px;font-weight:400;color:#3a3d4a;transform:scaleX(0.9900);">1111</div>
<div class="t" style="left:1549.30px;top:570.50px;font-size:13px;line-height:18px;font-weight:400;color:#3a3d4a;transform:scaleX(1.0229);">Default</div>
<div class="t" style="left:54.76px;top:638.50px;font-size:13px;line-height:18px;font-weight:400;color:#3a3d4a;transform:scaleX(0.9480);">nuevoTest@nuevoTest.com</div>
<div class="t" style="left:235.66px;top:638.50px;font-size:13px;line-height:18px;font-weight:400;color:#3a3d4a;transform:scaleX(0.9480);">nuevoTest@nuevoTest.com</div>
<div class="t" style="left:560.56px;top:638.50px;font-size:13px;line-height:18px;font-weight:400;color:#3a3d4a;transform:scaleX(0.9480);">nuevo</div>
<div class="t" style="left:660.56px;top:638.50px;font-size:13px;line-height:18px;font-weight:400;color:#3a3d4a;transform:scaleX(0.9480);">Test</div>
<div class="t" style="left:1657.73px;top:638.50px;font-size:13px;line-height:18px;font-weight:400;color:#3a3d4a;transform:scaleX(0.9900);">01234567890</div>
<div class="t" style="left:1549.30px;top:638.50px;font-size:13px;line-height:18px;font-weight:400;color:#3a3d4a;transform:scaleX(1.0229);">Default</div>
<div class="t" style="left:54.76px;top:705.50px;font-size:13px;line-height:18px;font-weight:400;color:#3a3d4a;transform:scaleX(0.9480);">nuevoTest1@nuevoTest1.com</div>
<div class="t" style="left:235.66px;top:705.50px;font-size:13px;line-height:18px;font-weight:400;color:#3a3d4a;transform:scaleX(0.9480);">nuevoTest1@nuevoTest1.com</div>
<div class="t" style="left:560.56px;top:705.50px;font-size:13px;line-height:18px;font-weight:400;color:#3a3d4a;transform:scaleX(0.9480);">nuevo</div>
<div class="t" style="left:660.56px;top:705.50px;font-size:13px;line-height:18px;font-weight:400;color:#3a3d4a;transform:scaleX(0.9480);">Test</div>
<div class="t" style="left:1657.73px;top:705.50px;font-size:13px;line-height:18px;font-weight:400;color:#3a3d4a;transform:scaleX(0.9900);">0123456789</div>
<div class="t" style="left:1549.30px;top:705.50px;font-size:13px;line-height:18px;font-weight:400;color:#3a3d4a;transform:scaleX(1.0229);">Default</div>
<div class="t" style="left:54.76px;top:773.50px;font-size:13px;line-height:18px;font-weight:400;color:#3a3d4a;transform:scaleX(0.9480);">manager3</div>
<div class="t" style="left:235.66px;top:773.50px;font-size:13px;line-height:18px;font-weight:400;color:#3a3d4a;transform:scaleX(0.9480);">manager3</div>
<div class="t" style="left:560.56px;top:773.50px;font-size:13px;line-height:18px;font-weight:400;color:#3a3d4a;transform:scaleX(0.9480);">test</div>
<div class="t" style="left:660.56px;top:773.50px;font-size:13px;line-height:18px;font-weight:400;color:#3a3d4a;transform:scaleX(0.9480);">manager3</div>
<div class="t" style="left:1657.73px;top:773.50px;font-size:13px;line-height:18px;font-weight:400;color:#3a3d4a;transform:scaleX(0.9900);">12345667</div>
<div class="t" style="left:1549.30px;top:773.50px;font-size:13px;line-height:18px;font-weight:400;color:#3a3d4a;transform:scaleX(1.0229);">Default</div>
<div class="t" style="left:54.76px;top:841.50px;font-size:13px;line-height:18px;font-weight:400;color:#3a3d4a;transform:scaleX(0.9480);">holaTest</div>
<div class="t" style="left:235.66px;top:841.50px;font-size:13px;line-height:18px;font-weight:400;color:#3a3d4a;transform:scaleX(0.9480);">null</div>
<div class="t" style="left:560.56px;top:841.50px;font-size:13px;line-height:18px;font-weight:400;color:#3a3d4a;transform:scaleX(0.9480);">Carrlos</div>
<div class="t" style="left:660.56px;top:841.50px;font-size:13px;line-height:18px;font-weight:400;color:#3a3d4a;transform:scaleX(0.9480);">Guardia</div>
<div class="t" style="left:1657.73px;top:841.50px;font-size:13px;line-height:18px;font-weight:400;color:#3a3d4a;transform:scaleX(0.9900);">12345678</div>
<div class="t" style="left:1549.30px;top:841.50px;font-size:13px;line-height:18px;font-weight:400;color:#3a3d4a;transform:scaleX(1.0229);">Default</div>
<div class="t" style="left:54.76px;top:908.50px;font-size:13px;line-height:18px;font-weight:400;color:#3a3d4a;transform:scaleX(0.9480);">christian2</div>
<div class="t" style="left:235.66px;top:908.50px;font-size:13px;line-height:18px;font-weight:400;color:#3a3d4a;transform:scaleX(0.9480);">christian2</div>
<div class="t" style="left:560.56px;top:908.50px;font-size:13px;line-height:18px;font-weight:400;color:#3a3d4a;transform:scaleX(0.9480);">Christian</div>
<div class="t" style="left:660.56px;top:908.50px;font-size:13px;line-height:18px;font-weight:400;color:#3a3d4a;transform:scaleX(0.9480);">Lopez Baya</div>
<div class="t" style="left:1657.73px;top:908.50px;font-size:13px;line-height:18px;font-weight:400;color:#3a3d4a;transform:scaleX(0.9900);">910</div>
<div class="t" style="left:1549.30px;top:908.50px;font-size:13px;line-height:18px;font-weight:400;color:#3a3d4a;transform:scaleX(1.0229);">Default</div>
<div class="t" style="left:1838.6px;top:29px;width:14px;text-align:center;font-size:18.5px;line-height:22px;color:#fff;font-weight:400">R</div>
<svg class="a" style="left:1904px;top:0" width="13" height="936"><polygon points="3,13.9 7.6,8.8 12.2,13.9" fill="#a3a3a3"/><polygon points="3,923 12,923 7.5,928.4" fill="#a3a3a3"/></svg>
<div class="a" style="left:1791px;top:874px;width:97px;height:44px;background:#1979b5;border-radius:22px 6px 22px 22px"></div><svg class="a" style="left:0;top:0" width="1917" height="936"><circle cx="1812.8" cy="895.8" r="9.3" fill="none" stroke="#fff" stroke-width="1.5"/><path d="M1809.9,893.2 Q1809.9,889.9 1812.9,889.9 Q1816,889.9 1816,892.8 Q1816,894.7 1814,895.6 Q1813,896.2 1813,897.9" fill="none" stroke="#fff" stroke-width="1.7"/><circle cx="1813" cy="900.6" r="1.05" fill="#fff"/></svg>
<div class="t" style="left:1829.9px;top:884.5px;font-size:16px;line-height:20px;font-weight:700;color:#fff;transform:scaleX(1.082)">Help</div>
</body></html>
